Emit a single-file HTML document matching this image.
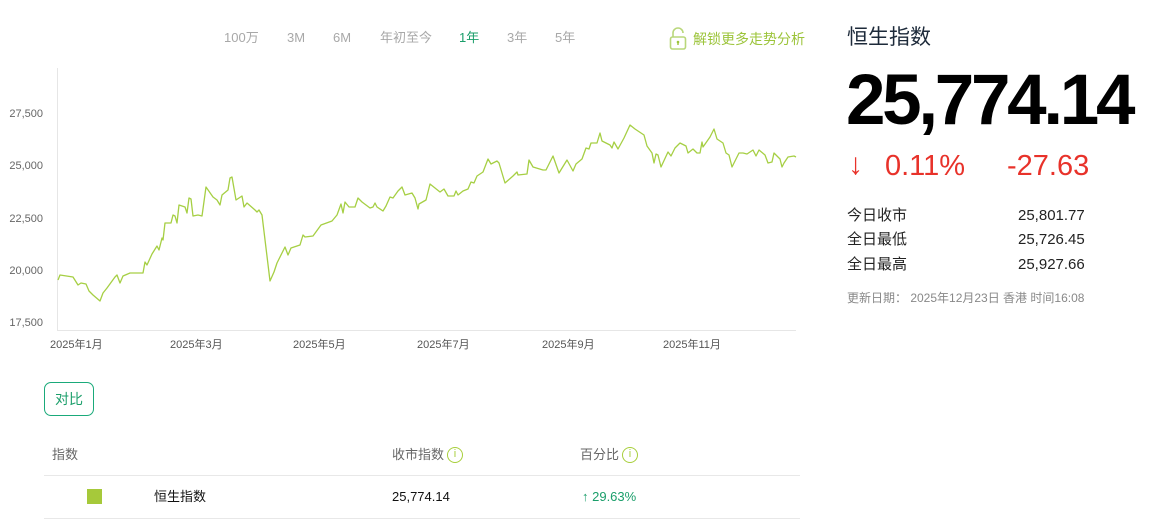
<!DOCTYPE html>
<html><head><meta charset="utf-8"><style>
*{margin:0;padding:0;box-sizing:border-box}
body{width:1165px;height:525px;background:#fff;font-family:"Liberation Sans","Noto Sans CJK SC",sans-serif;position:relative;overflow:hidden;color:#222}
.a{position:absolute;white-space:nowrap}
.tab{top:30px;font-size:13px;color:#a8a8a8;line-height:16px}
.yl{font-size:11px;color:#666;right:1122px;text-align:right;line-height:14px}
.xl{font-size:11px;color:#555;top:338px;line-height:14px}
.st{font-size:15px;color:#222;line-height:18px}
.hd{font-size:13px;color:#666;top:447px;line-height:16px}
.info{display:inline-block;width:16px;height:16px;border:1.5px solid #a8cf3c;border-radius:50%;color:#a8cf3c;font-size:11px;text-align:center;line-height:13px;vertical-align:top;margin-left:3px;margin-top:0px}
</style></head><body>
<div class="a tab" style="left:224px">100万</div>
<div class="a tab" style="left:287px">3M</div>
<div class="a tab" style="left:333px">6M</div>
<div class="a tab" style="left:380px">年初至今</div>
<div class="a tab" style="left:459px;color:#1a9e6a">1年</div>
<div class="a tab" style="left:507px">3年</div>
<div class="a tab" style="left:555px">5年</div>
<svg class="a" style="left:669px;top:27px" width="20" height="24" viewBox="0 0 20 24"><path d="M4 10V6a5 5 0 0 1 10 0" fill="none" stroke="#b9d77a" stroke-width="1.6"/><rect x="1.5" y="10" width="15" height="12" rx="2" fill="none" stroke="#b9d77a" stroke-width="1.6"/><circle cx="9" cy="15" r="1.3" fill="#9cc43a"/><path d="M9 15v3" stroke="#9cc43a" stroke-width="1.4"/></svg>
<div class="a" style="left:693px;top:30px;font-size:14px;color:#9cc43a;line-height:18px">解锁更多走势分析</div>

<div class="a yl" style="top:107px">27,500</div>
<div class="a yl" style="top:159px">25,000</div>
<div class="a yl" style="top:212px">22,500</div>
<div class="a yl" style="top:264px">20,000</div>
<div class="a yl" style="top:316px">17,500</div>
<svg class="a" style="left:0;top:0" width="810" height="340">
<line x1="57.5" y1="68" x2="57.5" y2="330" stroke="#e6e6e6"/>
<line x1="57" y1="330.5" x2="796" y2="330.5" stroke="#e6e6e6"/>
<polyline fill="none" stroke="#a6cf44" stroke-width="1.3" stroke-linejoin="round" points="58,280 60,275 73,277 78,285 81,283 86,284 89,291 93,295 100,301 103,293 107,288 115,277 117,275 120,283 123,276 130,273 143,273 145,262 147,265 152,254 157,246 159,250 162,238 163,240 165,223 171,223 173,215 175,216 177,223 179,205 185,207 187,213 189,198 191,199 193,216 198,215 202,216 206,187 213,197 217,200 220,205 222,195 228,190 230,178 232,177 236,200 242,196 244,207 247,203 255,210 257,212 259,210 262,215 270,281 274,272 277,263 285,247 288,255 291,248 300,245 303,235 305,237 313,236 321,225 332,221 337,215 341,204 343,213 345,202 349,207 355,207 358,198 362,202 370,208 373,207 375,203 377,207 383,211 386,206 390,197 393,198 398,191 402,187 405,195 412,193 415,198 418,209 419,204 426,200 430,184 440,192 444,189 448,196 454,196 456,191 458,195 463,191 468,189 471,182 474,183 477,176 483,172 488,159 491,164 497,161 499,163 505,183 513,176 517,172 518,175 527,174 529,160 533,167 543,170 546,170 553,156 559,173 567,160 573,171 576,164 582,159 586,148 589,149 591,143 597,143 600,133 602,141 610,145 612,148 614,142 618,149 624,138 630,125 635,129 644,135 647,146 652,153 654,163 656,154 658,155 661,167 668,152 671,156 675,148 680,143 686,146 688,153 693,149 697,153 700,153 702,142 703,147 710,137 714,129 717,139 723,143 726,153 729,155 732,167 739,153 743,153 747,154 753,150 756,156 759,150 765,155 768,163 772,162 774,153 780,159 782,167 784,163 788,157 794,156 796,157"/>
</svg>
<div class="a xl" style="left:50px">2025年1月</div>
<div class="a xl" style="left:170px">2025年3月</div>
<div class="a xl" style="left:293px">2025年5月</div>
<div class="a xl" style="left:417px">2025年7月</div>
<div class="a xl" style="left:542px">2025年9月</div>
<div class="a xl" style="left:663px">2025年11月</div>

<div class="a" style="left:44px;top:382px;width:50px;height:34px;border:1px solid #1aaa7a;border-radius:7px;color:#1a9e6a;font-size:14px;text-align:center;line-height:32px">对比</div>
<div class="a hd" style="left:52px">指数</div>
<div class="a hd" style="left:392px">收市指数<span class="info">i</span></div>
<div class="a hd" style="left:580px">百分比<span class="info">i</span></div>
<div class="a" style="left:44px;top:475px;width:756px;height:1px;background:#e8e8e8"></div>
<div class="a" style="left:44px;top:518px;width:756px;height:1px;background:#e8e8e8"></div>
<div class="a" style="left:87px;top:489px;width:15px;height:15px;background:#a6c93a"></div>
<div class="a" style="left:154px;top:489px;font-size:13px;color:#111;line-height:16px">恒生指数</div>
<div class="a" style="left:392px;top:489px;font-size:13px;color:#111;line-height:16px">25,774.14</div>
<div class="a" style="left:582px;top:489px;font-size:13px;color:#1a9e6a;line-height:16px"><b>↑</b> 29.63%</div>

<div class="a" style="left:847px;top:25px;font-size:21px;color:#1d2a3a;line-height:26px">恒生指数</div>
<div class="a" style="left:846px;top:61px;font-size:71px;font-weight:bold;color:#000;letter-spacing:-3.3px;line-height:80px">25,774.14</div>
<div class="a" style="left:848px;top:148px;font-size:30px;color:#e8322a;font-weight:bold;line-height:34px">↓</div>
<div class="a" style="left:885px;top:149px;font-size:29px;color:#e8322a;line-height:34px">0.11%</div>
<div class="a" style="left:1007px;top:149px;font-size:29px;color:#e8322a;line-height:34px">-27.63</div>
<div class="a st" style="left:847px;top:207px">今日收市</div><div class="a st" style="left:1018px;top:207px">25,801.77</div>
<div class="a st" style="left:847px;top:231px">全日最低</div><div class="a st" style="left:1018px;top:231px">25,726.45</div>
<div class="a st" style="left:847px;top:256px">全日最高</div><div class="a st" style="left:1018px;top:256px">25,927.66</div>
<div class="a" style="left:847px;top:290px;font-size:12px;color:#888;line-height:16px">更新日期： 2025年12月23日 香港 时间16:08</div>
</body></html>
